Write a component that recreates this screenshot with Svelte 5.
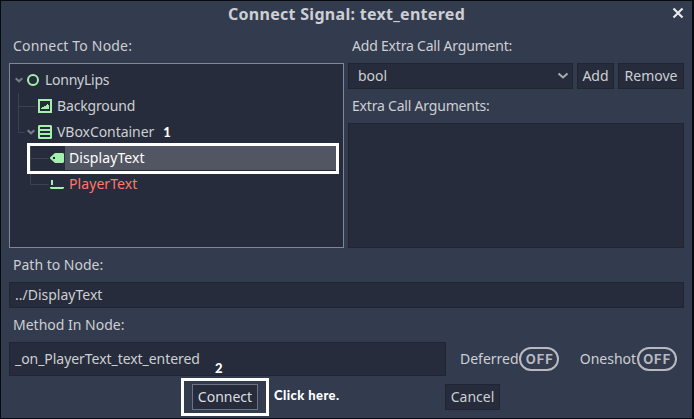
<script>
  const nodes = [
    { name: 'LonnyLips', icon: 'node', pad: 5, open: true, track: -0.25 },
    { name: 'Background', icon: 'picture', pad: 28, track: -0.15 },
    { name: 'VBoxContainer', icon: 'vbox', pad: 17, open: true, mark: '1', track: -0.05 },
    { name: 'DisplayText', icon: 'label', pad: 40, selected: true, track: 0.1 },
    { name: 'PlayerText', icon: 'line', pad: 40, invalid: true, track: 0.08 }
  ];
  const args = [];
</script>

{#snippet chevron()}
  <svg class="chevron" width="8" height="6" viewBox="0 0 8 6"><path d="M.7 1.200l3.300 3.100 3.300-3.100" /></svg>
{/snippet}

{#snippet icon(kind)}
  <svg class="icon {kind}" width="14" height="14" viewBox="0 0 14 14">
    {#if kind === 'node'}
      <circle cx="6" cy="7" r="5" fill="none" stroke="#a5efac" stroke-width="2" />
    {:else if kind === 'picture'}
      <path fill-rule="evenodd" d="M0 0h14v14H0zM2 2v10h10V2zM3 10V9h1V8h2V7h2V6h1V5h1v1h1v4z" />
    {:else if kind === 'vbox'}
      <path fill-rule="evenodd" d="M1 0h12l1 1v12l-1 1H1l-1-1V1zM2 2v2h10V2zM2 6v2h10V6zM2 10v2h10v-2z" />
    {:else if kind === 'label'}
      <path fill-rule="evenodd" d="M5 2h8l1 1v8l-1 1H5L0 7.500v-1zM3 6v2h2V6z" />
    {:else}
      <path d="M1 3h2v5H1zM0 10h14v1l-1 1H1l-1-1z" />
    {/if}
  </svg>
{/snippet}

{#snippet toggle(name)}
  <div class="toggle"><span>{name}</span><b>OFF</b></div>
{/snippet}

<div class="screen">
  <div class="dialog">
    <header>
      <h1>Connect Signal: text_entered</h1>
      <svg class="close" width="12" height="12" viewBox="0 0 12 12"><path d="M1.500 1.500l9 9M10.500 1.500l-9 9" /></svg>
    </header>
    <div class="columns">
      <section class="left">
        <div class="caption first wide">Connect To Node:</div>
        <div class="tree">
          <svg class="guides" width="60" height="135" viewBox="0 0 60 135">
            <path d="M8.500 29v39.500h6M8.500 42.500h18M20.500 81v39.500h18M20.500 94.500h18" />
          </svg>
          {#each nodes as n}
            <div class="row" class:selected={n.selected} class:invalid={n.invalid} style="padding-left:{n.pad}px">
              {#if n.open}{@render chevron()}{/if}
              {@render icon(n.icon)}
              <span class="name" style="letter-spacing:{n.track}px">{n.name}</span>
              {#if n.mark}<b class="note one">{n.mark}</b>{/if}
            </div>
          {/each}
          <div class="highlight pick"></div>
        </div>
      </section>
      <section class="right">
        <div class="caption first tight">Add Extra Call Argument:</div>
        <div class="controls">
          <div class="field select"><span>bool</span>
            <svg width="12" height="8" viewBox="0 0 12 8"><path d="M1.500 1.500l4.500 4 4.500-4" /></svg>
          </div>
          <button class="add">Add</button>
          <button class="remove">Remove</button>
        </div>
        <div class="caption tight">Extra Call Arguments:</div>
        <div class="field list">{#each args as a}<span>{a}</span>{/each}</div>
      </section>
    </div>
    <div class="caption">Path to Node:</div>
    <div class="field path">../DisplayText</div>
    <div class="caption">Method In Node:</div>
    <div class="method">
      <div class="field name-field"><span>_on_PlayerText_text_entered</span><b class="note two">2</b></div>
      {@render toggle('Deferred')}
      {@render toggle('Oneshot')}
    </div>
    <footer>
      <div class="connect-wrap"><button class="connect">Connect</button><div class="highlight press"></div></div>
      <b class="note click">Click here.</b>
      <button class="cancel">Cancel</button>
    </footer>
  </div>
</div>

<style>
  * { box-sizing: border-box; }
  .screen {
    width: 694px; height: 419px; padding: 1px 2px 1px 1px; background: #08090c;
    font: 14px/20px "Noto Sans", sans-serif; color: #cdcfd2; overflow: hidden; white-space: nowrap;
  }
  .dialog { height: 417px; padding: 0 8px; background: #333b4f; display: flex; flex-direction: column; }
  header { height: 30px; flex: none; display: grid; grid-template-columns: 1fr auto; }
  h1 { margin: 3px 0 0; font-size: 16px; line-height: 21px; font-weight: 700; letter-spacing: .29px; text-align: center; grid-area: 1 / 1 / 2 / 3; }
  .close { grid-area: 1 / 2; margin: 6px 0 0; }
  .close path { fill: none; stroke: #e8e9eb; stroke-width: 2.200; }
  .columns { display: flex; gap: 4px; height: 217px; flex: none; }
  .left { width: 335px; }
  .right { width: 336px; }
  .caption { height: 34px; line-height: 34px; padding-left: 4px; flex: none; }
  .caption.first { height: 32px; line-height: 30px; }
  .wide { letter-spacing: .18px; }
  .tight { letter-spacing: -.2px; }
  .tree { position: relative; height: 185px; border: 1px solid #7e8895; background: #262c3b; padding: 3px 5px 0 0; }
  .row { position: relative; display: flex; align-items: center; height: 26px; }
  .selected { color: #fff; }
  .selected::before { content: ''; position: absolute; left: 55px; right: 0; top: 1px; bottom: 1px; background: #525663; }
  .selected .name { position: relative; }
  .invalid { color: #ff786b; }
  .chevron { flex: none; margin-right: 4px; }
  .chevron path { fill: none; stroke: #797e89; stroke-width: 2; }
  .icon { fill: #a5efac; flex: none; margin-right: 5px; }
  .icon.vbox { margin-left: -1px; }
  .icon.node { margin-right: 4px; }
  .guides { position: absolute; left: 0; top: 0; }
  .guides path { fill: none; stroke: #3c4250; }
  .highlight { position: absolute; border: 3px solid #fff; }
  .pick { left: 17px; top: 79px; width: 312px; height: 31px; }
  .note { font: 900 13px/16px Lato, sans-serif; color: #fff; }
  .one { margin-left: 9px; }
  .controls { display: flex; gap: 4px; height: 26px; }
  .field { background: #262c3b; border: 1px solid #202531; }
  .select { width: 225px; display: flex; align-items: center; justify-content: space-between; padding: 0 3px 0 9px; }
  .select path { fill: none; stroke: #a9acb3; stroke-width: 2; }
  button { height: 26px; padding: 0; font: inherit; color: inherit; background: #262c3b; border: 1px solid #202531; }
  .add { width: 37px; }
  .remove { width: 66px; }
  .list { height: 125px; }
  .path { height: 26px; line-height: 24px; padding-left: 5px; width: 675px; flex: none; }
  .method { display: flex; align-items: center; height: 34px; flex: none; }
  .name-field { position: relative; flex: none; width: 437px; height: 34px; line-height: 32px; padding-left: 5px; margin-right: 14px; letter-spacing: -.05px; }
  .two { position: absolute; left: 205px; top: 17px; }
  .toggle { display: flex; align-items: center; flex: none; margin-right: 20.500px; }
  .toggle span { margin-right: .6px; }
  .toggle b {
    width: 40px; height: 24px; border: 2px solid #b8babf; border-radius: 12px; color: #b8babf;
    font: 700 13px/20px Inter, sans-serif; letter-spacing: .9px; text-indent: 1px; text-align: center;
  }
  footer { display: flex; height: 26px; margin-top: 8px; padding-left: 183px; }
  .connect-wrap { position: relative; width: 66px; }
  .connect { width: 66px; border-color: #6c7484; color: #dddee1; }
  .press { left: -11px; top: -6px; width: 88px; height: 38px; }
  .click { width: 155px; margin: 3px 0 0 16px; letter-spacing: .42px; }
  .cancel { margin-left: 16px; width: 55px; }
</style>
